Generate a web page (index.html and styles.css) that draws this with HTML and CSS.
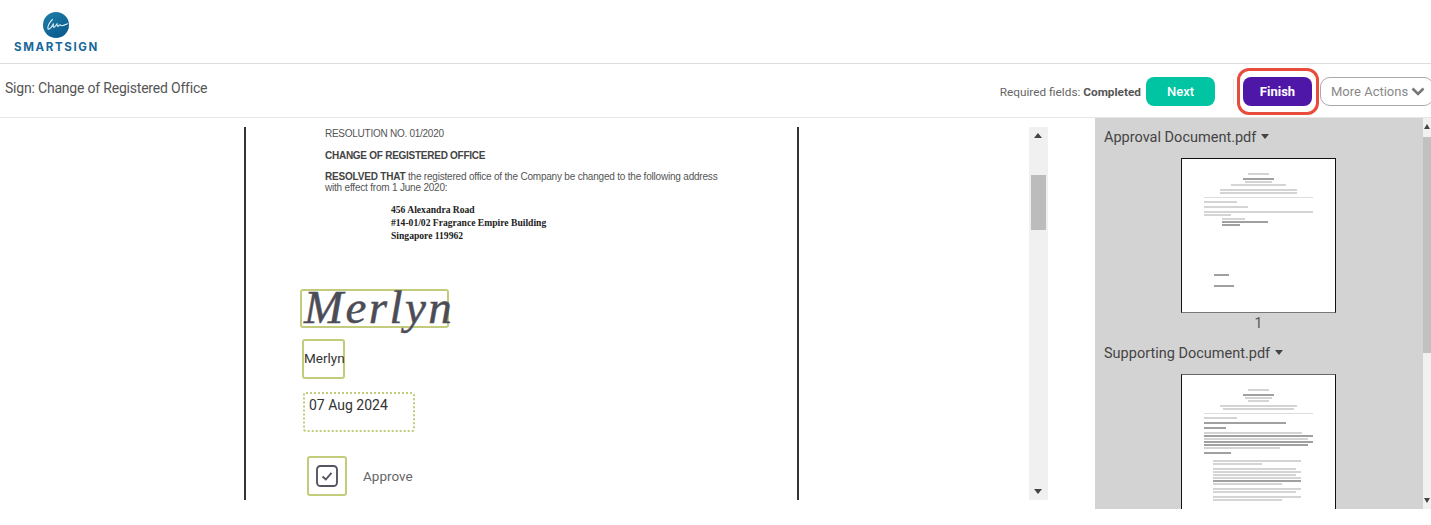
FILE: index.html
```html
<html>
<head>
    <title>Sign: Change of Registered Office</title>
    <link rel="stylesheet" href="styles.css">
</head>
<body>

<div class='header'>
    <div class='logo'>
        <svg class='logo-mark' width='28' height='28' viewBox='0 0 28 28'>
            <defs>
                <linearGradient id='logo-fill' x1='0' y1='0' x2='0.6' y2='1'>
                    <stop offset='0' stop-color='#1f7fa8'/>
                    <stop offset='1' stop-color='#0a5c8f'/>
                </linearGradient>
            </defs>
            <circle cx='14' cy='14' r='13' fill='url(#logo-fill)'/>
            <path d='M10.5 8.5 C7.5 11 5 16 6 18 C7.5 19 10.5 15 11.5 12.5 C11 15 11 17 12.5 16 C13.5 15 14.5 13.5 15 13 C15 15 15.5 16 17 14.5 C18 13.5 18.5 13.5 19 14.5 C20 15 23 14 25.5 12.8' fill='none' stroke='#e4f0f6' stroke-width='1.1' stroke-linecap='round'/>
        </svg>
        <span class='logo-name'>SMARTSIGN</span>
    </div>
</div>

<div class='toolbar'>
    <div class='doc-title'>Sign: Change of Registered Office</div>
    <div class='actions'>
        <span class='required'>Required fields: <b>Completed</b></span>
        <button class='btn btn-next'>Next</button>
        <span class='divider'></span>
        <button class='btn btn-finish'>Finish<span class='highlight'></span></button>
        <button class='btn btn-more'>More Actions
            <svg width='14' height='9' viewBox='0 0 14 9'><path d='M1.5 1.5 L7 7 L12.5 1.5' fill='none' stroke='#777' stroke-width='2.6'/></svg>
        </button>
    </div>
</div>

<div class='workspace'>
    <div class='viewer'>
        <div class='page'>
            <p class='doc-line doc-no'>RESOLUTION NO. 01/2020</p>
            <p class='doc-line doc-heading'>CHANGE OF REGISTERED OFFICE</p>
            <p class='doc-line doc-body'><b>RESOLVED THAT</b> the registered office of the Company be changed to the following address<br>with effect from 1 June 2020:</p>
            <p class='doc-address'>456 Alexandra Road<br>#14-01/02 Fragrance Empire Building<br>Singapore 119962</p>

            <div class='field field-sign'><span>Merlyn</span></div>
            <div class='field field-initial'>Merlyn</div>
            <div class='field field-date'>07 Aug 2024</div>
            <div class='field field-check'>
                <svg width='22' height='22' viewBox='0 0 22 22'>
                    <rect x='1' y='1' width='20' height='20' rx='3.5' fill='none' stroke='#555561' stroke-width='1.9'/>
                    <path d='M6.5 11.5 L9.8 14.5 L15.5 7.8' fill='none' stroke='#555561' stroke-width='1.9'/>
                </svg>
            </div>
            <div class='check-label'>Approve</div>
        </div>
        <div class='scroller'>
            <span class='arrow arrow-up'></span>
            <span class='scroller-thumb'></span>
            <span class='arrow arrow-down'></span>
        </div>
    </div>

    <div class='sidebar'>
        <div class='thumbs'>
            <div class='thumb-title'>Approval Document.pdf <span class='caret'></span></div>
            <div class='thumb'>
                <div class='bars bars-center'>
                    <i class='w20'></i><i class='w28 dark gap'></i><i class='w25'></i><i class='w50'></i>
                    <i class='w70 gap'></i><i class='w70'></i>
                </div>
                <div class='rule'></div>
                <div class='bars'>
                    <i class='w30'></i><i class='w40 gap'></i><i class='w100 gap'></i><i class='w25'></i>
                </div>
                <div class='bars bars-indent'>
                    <i class='w25'></i><i class='w50 dark'></i><i class='w20 dark'></i>
                </div>
                <div class='bars bars-sign'>
                    <i class='w15 dark'></i><i class='w20 dark wide-gap'></i>
                </div>
            </div>
            <div class='thumb-num'>1</div>

            <div class='thumb-title'>Supporting Document.pdf <span class='caret'></span></div>
            <div class='thumb thumb-cut'>
                <div class='bars bars-center'>
                    <i class='w20'></i><i class='w28 dark gap'></i><i class='w25'></i><i class='w20'></i>
                    <i class='w70 gap'></i><i class='w65'></i>
                </div>
                <div class='rule'></div>
                <div class='bars'>
                    <i class='w30'></i><i class='w75 dark gap'></i><i class='w20 dark gap'></i>
                    <i class='w90 gap'></i><i class='w100 dark'></i><i class='w95'></i><i class='w100 dark'></i><i class='w95 dark'></i><i class='w70'></i>
                    <i class='w25 dark gap'></i>
                </div>
                <div class='bars bars-list'>
                    <i class='w90'></i><i class='w50'></i>
                    <i class='w85 gap'></i><i class='w90'></i><i class='w85'></i><i class='w90'></i><i class='w90 dark'></i><i class='w70'></i>
                    <i class='w90 gap'></i><i class='w85'></i>
                    <i class='w90 gap'></i><i class='w70'></i>
                </div>
            </div>
        </div>
        <div class='side-scroller'>
            <span class='arrow arrow-up arrow-small'></span>
            <span class='side-thumb'></span>
            <span class='arrow arrow-down arrow-small'></span>
        </div>
    </div>
</div>

</body>
</html>
```

FILE: styles.css
```css
body {
    margin: 0;
    height: 525px;
    overflow: hidden;
    background: #fff;
    font-family: Roboto, sans-serif;
    color: #555;
}

/* top bars */

.header {
    height: 63px;
    border-bottom: 1px solid #ddd;
    padding-left: 14px;
    box-sizing: content-box;
}

.logo {
    width: 85px;
    padding-top: 11px;
    display: flex;
    flex-direction: column;
    align-items: center;
}

.logo-mark {
    margin-right: 1px;
}

.logo-name {
    margin-top: 2px;
    font-family: Inter, sans-serif;
    font-size: 11.5px;
    line-height: 13px;
    font-weight: 700;
    letter-spacing: 1.65px;
    color: #17689c;
    white-space: nowrap;
}

.toolbar {
    height: 53px;
    border-bottom: 1px solid #e6e6e6;
    display: flex;
    justify-content: space-between;
    padding-left: 5px;
}

.doc-title {
    padding-top: 15px;
    font-size: 14px;
    line-height: 18px;
    letter-spacing: -0.2px;
    color: #555;
}

.actions {
    display: flex;
    align-items: center;
    height: 29px;
    margin-top: 13px;
}

.required {
    font-size: 11.8px;
    color: #666;
    margin-right: 5px;
}

.required b {
    color: #555;
}

.btn {
    height: 29px;
    border: 0;
    padding: 0;
    border-radius: 8px;
    font-family: Roboto, sans-serif;
    font-size: 13px;
    font-weight: 500;
    color: #fff;
}

.btn-next {
    width: 69px;
    background: #00c4a2;
}

.divider {
    width: 1px;
    height: 25px;
    margin: 0 9px 0 18px;
    background: #e6e6e6;
}

.btn-finish {
    position: relative;
    width: 69px;
    background: #4f17a8;
    font-weight: 700;
    margin-right: 8px;
}

.highlight {
    position: absolute;
    top: -9px;
    bottom: -9px;
    left: -6px;
    right: -7px;
    border: 3px solid #e74c3c;
    border-radius: 12px;
}

.btn-more {
    width: 114px;
    flex: none;
    margin-right: -3px;
    background: #fff;
    border: 1px solid #aaa;
    border-radius: 10px;
    color: #888;
    font-size: 13px;
    font-weight: 400;
    display: flex;
    align-items: center;
    gap: 3px;
    padding-left: 10px;
}

/* document area */

.workspace {
    height: 391px;
    display: flex;
}

.viewer {
    width: 1095px;
    height: 382px;
    padding-top: 9px;
    box-sizing: border-box;
    display: flex;
    align-items: flex-start;
    padding-left: 244px;
}

.page {
    position: relative;
    width: 555px;
    height: 373px;
    box-sizing: border-box;
    border-left: 2px solid #333;
    border-right: 2px solid #333;
    padding: 0 0 0 79px;
    font-family: "Liberation Sans", sans-serif;
}

.doc-line {
    margin: 0;
    font-size: 10px;
    line-height: 11px;
    letter-spacing: -0.26px;
    color: #555;
}

.doc-no {
    padding-top: 1px;
}

.doc-heading {
    margin-top: 11px;
    color: #444;
    font-weight: 700;
}

.doc-body {
    margin-top: 10px;
    letter-spacing: -0.2px;
}

.doc-body b {
    color: #444;
}

.doc-address {
    margin: 10px 0 0 66px;
    font-family: "Liberation Serif", serif;
    font-size: 9.6px;
    line-height: 13px;
    font-weight: 700;
    color: #222;
}

/* fields are placed on the page itself */

.field {
    position: absolute;
    box-sizing: border-box;
    border: 2px solid #c3cc7c;
    border-radius: 3px;
}

.field-sign {
    left: 54px;
    top: 162px;
    width: 149px;
    height: 39px;
}

.field-sign span {
    position: absolute;
    left: 2px;
    top: -9px;
    font-family: "Liberation Serif", serif;
    font-style: italic;
    font-size: 47px;
    line-height: 50px;
    letter-spacing: 2.4px;
    color: #4c4c57;
    -webkit-text-stroke: 0.5px #4c4c57;
    white-space: nowrap;
}

.field-initial {
    left: 56px;
    top: 212px;
    width: 43px;
    height: 40px;
    padding-right: 3px;
    font-family: Roboto, sans-serif;
    font-size: 13.5px;
    line-height: 35px;
    color: #333;
    text-align: center;
    white-space: nowrap;
}

.field-date {
    left: 57px;
    top: 265px;
    width: 112px;
    height: 40px;
    border-style: dotted;
    font-family: Roboto, sans-serif;
    font-size: 14px;
    line-height: 23px;
    padding-left: 4px;
    color: #333;
}

.field-check {
    left: 61px;
    top: 329px;
    width: 40px;
    height: 40px;
    display: flex;
    align-items: center;
    justify-content: center;
}

.check-label {
    position: absolute;
    left: 117px;
    top: 341px;
    font-family: Roboto, sans-serif;
    font-size: 13.5px;
    line-height: 17px;
    color: #666;
}

/* scrollbars */

.scroller {
    position: relative;
    width: 19px;
    height: 373px;
    margin-left: 230px;
    background: #f0f0f0;
}

.scroller-thumb {
    position: absolute;
    left: 2px;
    top: 48px;
    width: 15px;
    height: 55px;
    background: #bcbcbc;
}

.arrow {
    position: absolute;
    left: 5px;
    width: 0;
    height: 0;
    border-left: 4.5px solid transparent;
    border-right: 4.5px solid transparent;
}

.arrow-up {
    top: 6px;
    border-bottom: 5px solid #444;
}

.arrow-down {
    bottom: 6px;
    border-top: 5px solid #444;
}

.arrow-small {
    left: 1px;
    border-left-width: 3px;
    border-right-width: 3px;
}

/* thumbnails */

.sidebar {
    width: 336px;
    display: flex;
    background: #d3d3d3;
}

.thumbs {
    width: 328px;
    overflow: hidden;
}

.thumb-title {
    padding-left: 9px;
    font-size: 14.5px;
    line-height: 18px;
    margin-top: 11px;
    color: #444;
}

.caret {
    display: inline-block;
    margin: 0 0 3px 1px;
    border-left: 4.5px solid transparent;
    border-right: 4.5px solid transparent;
    border-top: 5px solid #444;
}

.thumb {
    box-sizing: border-box;
    width: 155px;
    height: 155px;
    margin: 11px 0 0 86px;
    padding-top: 14px;
    background: #fff;
    border: 1px solid #111;
    border-bottom-color: #777;
}

.thumb-cut {
    height: 160px;
    border-top-color: #666;
}

.thumb-num {
    margin-top: 1px;
    padding-left: 86px;
    width: 155px;
    text-align: center;
    font-size: 14px;
    line-height: 18px;
    color: #555;
}

.thumb-num + .thumb-title {
    margin-top: 13px;
}

.rule {
    height: 1px;
    margin: 3px 22px;
    background: #ddd;
}

.bars {
    display: flex;
    flex-direction: column;
    gap: 1px;
    margin: 0 22px;
    filter: blur(0.4px);
}

.bars-center {
    align-items: center;
}

.bars-indent {
    margin: 2px 22px 0 40px;
}

.bars-sign {
    margin: 48px 22px 0 32px;
}

.bars-list {
    margin: 6px 24px 0 31px;
}

.bars i {
    display: block;
    height: 2px;
    background: #d4d4d4;
}

.bars i.dark {
    background: #a0a0a0;
}

.bars i.gap {
    margin-top: 2px;
}

.bars i.wide-gap {
    margin-top: 8px;
}

.w15 { width: 15%; }
.w20 { width: 20%; }
.w25 { width: 25%; }
.w28 { width: 28%; }
.w30 { width: 30%; }
.w40 { width: 40%; }
.w50 { width: 50%; }
.w65 { width: 65%; }
.w70 { width: 70%; }
.w75 { width: 75%; }
.w85 { width: 85%; }
.w90 { width: 90%; }
.w95 { width: 95%; }
.w100 { width: 100%; }

.side-scroller {
    position: relative;
    width: 8px;
    background: #f1f1f1;
}

.side-thumb {
    position: absolute;
    left: 0;
    top: 19px;
    width: 8px;
    height: 216px;
    background: #c1c1c1;
}
```
